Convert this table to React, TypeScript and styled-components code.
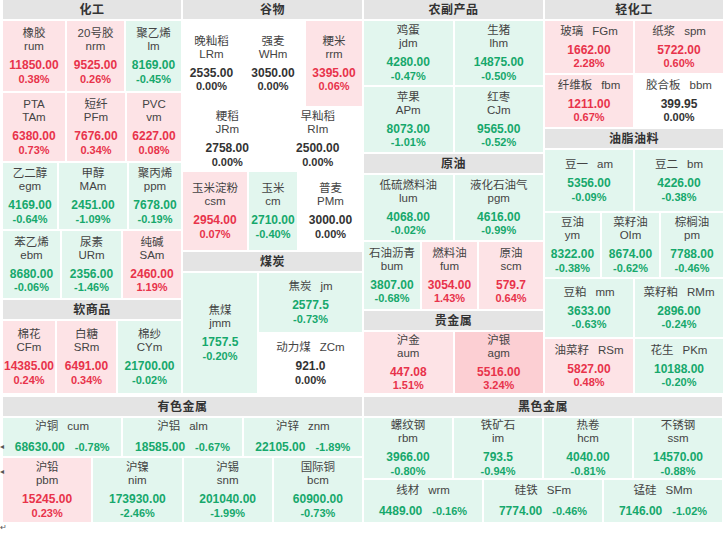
import React from 'react';
import styled, { createGlobalStyle } from 'styled-components';

type Tone = 'up' | 'down' | 'flat' | 'hot';
type Layout = 'stack' | 'inline' | 'flat';

interface Quote {
  name: string;
  code: string;
  price: string;
  pct: string;
  hot?: boolean;
}

interface RowDef {
  h: number;
  cols: string;
  layout: Layout;
  cells: Quote[];
}

const q = (name: string, code: string, price: string, pct: string, hot?: boolean): Quote => ({ name, code, price, pct, hot });

const toneOf = (x: Quote): Tone => {
  if (x.hot) return 'hot';
  if (x.pct.startsWith('-')) return 'down';
  if (x.pct === '0.00%') return 'flat';
  return 'up';
};

const BG: Record<Tone, string> = {
  up: '#fde3e6',
  down: '#e2f6ee',
  flat: '#ffffff',
  hot: '#fccfd3',
};

const FG: Record<Tone, string> = {
  up: '#e8334b',
  down: '#16a86c',
  flat: '#333333',
  hot: '#e8334b',
};

const Global = createGlobalStyle`
  html, body { margin: 0; padding: 0; background: #ffffff; }
  body { font-family: "Liberation Sans", "Noto Sans CJK SC", sans-serif; }
`;

const Page = styled.div`
  position: relative;
  width: 725px;
  height: 533px;
  padding-left: 3px;
  box-sizing: border-box;
`;

const Top = styled.div`
  display: grid;
  grid-template-columns: 178px 179px 179px 178px;
  column-gap: 2px;
`;

const Column = styled.div`
  display: flex;
  flex-direction: column;
  gap: 2px;
`;

const Bottom = styled.div`
  display: grid;
  grid-template-columns: 359px 358px;
  column-gap: 2px;
  margin-top: 4px;
`;

const SectionBox = styled.section`
  display: flex;
  flex-direction: column;
  gap: 2px;
`;

const Header = styled.div<{ $h: number }>`
  height: ${p => p.$h}px;
  background: #e4e4e4;
  display: flex;
  align-items: center;
  justify-content: center;
  font-size: 12px;
  line-height: 14px;
  font-weight: 700;
  color: #333;
  letter-spacing: 0.5px;
`;

const Row = styled.div<{ $h: number; $cols: string }>`
  display: grid;
  grid-template-columns: ${p => p.$cols};
  column-gap: 2px;
  height: ${p => p.$h}px;
`;

const Cell = styled.div<{ $tone: Tone; $layout: Layout }>`
  background: ${p => BG[p.$tone]};
  display: flex;
  flex-direction: column;
  align-items: center;
  justify-content: center;
  gap: ${p => (p.$layout === 'flat' ? 8 : 6)}px;
  min-width: 0;
  white-space: nowrap;
`;

const Labels = styled.div<{ $inline: boolean }>`
  display: flex;
  flex-direction: ${p => (p.$inline ? 'row' : 'column')};
  align-items: center;
  column-gap: 9px;
  font-size: 11.5px;
  line-height: 13px;
  color: #444;
`;

const Numbers = styled.div<{ $inline: boolean; $tone: Tone }>`
  display: flex;
  flex-direction: ${p => (p.$inline ? 'row' : 'column')};
  align-items: center;
  column-gap: 10px;
  font-size: 12px;
  line-height: 13.5px;
  font-weight: 700;
  color: ${p => FG[p.$tone]};
`;

const Pct = styled.span`
  font-size: 11px;
  line-height: 12.5px;
`;

const Split = styled.div<{ $h: number; $cols: string }>`
  display: grid;
  grid-template-columns: ${p => p.$cols};
  column-gap: 2px;
  height: ${p => p.$h}px;
`;

const Stack = styled.div<{ $rows: string }>`
  display: grid;
  grid-template-rows: ${p => p.$rows};
  row-gap: 2px;
`;

const Mark = styled.span<{ $top: number }>`
  position: absolute;
  left: 0;
  top: ${p => p.$top}px;
  font-size: 8px;
  line-height: 9px;
  color: #555;
`;

const QuoteCell: React.FC<{ x: Quote; layout: Layout }> = ({ x, layout }) => {
  const tone = toneOf(x);
  return (
    <Cell $tone={tone} $layout={layout}>
      <Labels $inline={layout !== 'stack'}>
        <span>{x.name}</span>
        <span>{x.code}</span>
      </Labels>
      <Numbers $inline={layout === 'flat'} $tone={tone}>
        <span>{x.price}</span>
        <Pct>{x.pct}</Pct>
      </Numbers>
    </Cell>
  );
};

const Section: React.FC<{ title: string; hh?: number; rows: RowDef[] }> = ({ title, hh = 19, rows }) => (
  <SectionBox>
    <Header $h={hh}>{title}</Header>
    {rows.map((r, i) => (
      <Row key={i} $h={r.h} $cols={r.cols}>
        {r.cells.map(c => (
          <QuoteCell key={c.code} x={c} layout={r.layout} />
        ))}
      </Row>
    ))}
  </SectionBox>
);

const chem: RowDef[] = [
  { h: 70, cols: '62px 57px 1fr', layout: 'stack', cells: [q('橡胶', 'rum', '11850.00', '0.38%'), q('20号胶', 'nrm', '9525.00', '0.26%'), q('聚乙烯', 'lm', '8169.00', '-0.45%')] },
  { h: 68, cols: '62px 58px 1fr', layout: 'stack', cells: [q('PTA', 'TAm', '6380.00', '0.73%'), q('短纤', 'PFm', '7676.00', '0.34%'), q('PVC', 'vm', '6227.00', '0.08%')] },
  { h: 66, cols: '54px 68px 1fr', layout: 'stack', cells: [q('乙二醇', 'egm', '4169.00', '-0.64%'), q('甲醇', 'MAm', '2451.00', '-1.09%'), q('聚丙烯', 'ppm', '7678.00', '-0.19%')] },
  { h: 67, cols: '57px 59px 1fr', layout: 'stack', cells: [q('苯乙烯', 'ebm', '8680.00', '-0.06%'), q('尿素', 'URm', '2356.00', '-1.46%'), q('纯碱', 'SAm', '2460.00', '1.19%')] },
];

const soft: RowDef[] = [
  { h: 72, cols: '52px 59px 1fr', layout: 'stack', cells: [q('棉花', 'CFm', '14385.00', '0.24%'), q('白糖', 'SRm', '6491.00', '0.34%'), q('棉纱', 'CYm', '21700.00', '-0.02%')] },
];

const grain: RowDef[] = [
  { h: 85, cols: '57px 62px 1fr', layout: 'stack', cells: [q('晚籼稻', 'LRm', '2535.00', '0.00%'), q('强麦', 'WHm', '3050.00', '0.00%'), q('粳米', 'rrm', '3395.00', '0.06%')] },
  { h: 62, cols: '1fr 1fr', layout: 'stack', cells: [q('粳稻', 'JRm', '2758.00', '0.00%'), q('早籼稻', 'RIm', '2500.00', '0.00%')] },
  { h: 78, cols: '64px 48px 1fr', layout: 'stack', cells: [q('玉米淀粉', 'csm', '2954.00', '0.07%'), q('玉米', 'cm', '2710.00', '-0.40%'), q('普麦', 'PMm', '3000.00', '0.00%')] },
];

const agri: RowDef[] = [
  { h: 64, cols: '1fr 1fr', layout: 'stack', cells: [q('鸡蛋', 'jdm', '4280.00', '-0.47%'), q('生猪', 'lhm', '14875.00', '-0.50%')] },
  { h: 65, cols: '1fr 1fr', layout: 'stack', cells: [q('苹果', 'APm', '8073.00', '-1.01%'), q('红枣', 'CJm', '9565.00', '-0.52%')] },
];

const crude: RowDef[] = [
  { h: 65, cols: '1fr 1fr', layout: 'stack', cells: [q('低硫燃料油', 'lum', '4068.00', '-0.02%'), q('液化石油气', 'pgm', '4616.00', '-0.99%')] },
  { h: 67, cols: '56px 55px 1fr', layout: 'stack', cells: [q('石油沥青', 'bum', '3807.00', '-0.68%'), q('燃料油', 'fum', '3054.00', '1.43%'), q('原油', 'scm', '579.7', '0.64%')] },
];

const precious: RowDef[] = [
  { h: 61, cols: '1fr 1fr', layout: 'stack', cells: [q('沪金', 'aum', '447.08', '1.51%'), q('沪银', 'agm', '5516.00', '3.24%', true)] },
];

const light: RowDef[] = [
  { h: 52, cols: '1fr 1fr', layout: 'inline', cells: [q('玻璃', 'FGm', '1662.00', '2.28%'), q('纸浆', 'spm', '5722.00', '0.60%')] },
  { h: 52, cols: '1fr 1fr', layout: 'inline', cells: [q('纤维板', 'fbm', '1211.00', '0.67%'), q('胶合板', 'bbm', '399.95', '0.00%')] },
];

const oils: RowDef[] = [
  { h: 61, cols: '1fr 1fr', layout: 'inline', cells: [q('豆一', 'am', '5356.00', '-0.09%'), q('豆二', 'bm', '4226.00', '-0.38%')] },
  { h: 64, cols: '55px 57px 1fr', layout: 'stack', cells: [q('豆油', 'ym', '8322.00', '-0.38%'), q('菜籽油', 'OIm', '8674.00', '-0.62%'), q('棕榈油', 'pm', '7788.00', '-0.46%')] },
  { h: 58, cols: '1fr 1fr', layout: 'inline', cells: [q('豆粕', 'mm', '3633.00', '-0.63%'), q('菜籽粕', 'RMm', '2896.00', '-0.24%')] },
  { h: 54, cols: '1fr 1fr', layout: 'inline', cells: [q('油菜籽', 'RSm', '5827.00', '0.48%'), q('花生', 'PKm', '10188.00', '-0.20%')] },
];

const nonferrous: RowDef[] = [
  { h: 38, cols: '1fr 1fr 1fr', layout: 'flat', cells: [q('沪铜', 'cum', '68630.00', '-0.78%'), q('沪铝', 'alm', '18585.00', '-0.67%'), q('沪锌', 'znm', '22105.00', '-1.89%')] },
  { h: 64, cols: '1fr 1fr 1fr 1fr', layout: 'stack', cells: [q('沪铅', 'pbm', '15245.00', '0.23%'), q('沪镍', 'nim', '173930.00', '-2.46%'), q('沪锡', 'snm', '201040.00', '-1.99%'), q('国际铜', 'bcm', '60900.00', '-0.73%')] },
];

const ferrous: RowDef[] = [
  { h: 60, cols: '1fr 1fr 1fr 1fr', layout: 'stack', cells: [q('螺纹钢', 'rbm', '3966.00', '-0.80%'), q('铁矿石', 'im', '793.5', '-0.94%'), q('热卷', 'hcm', '4040.00', '-0.81%'), q('不锈钢', 'ssm', '14570.00', '-0.88%')] },
  { h: 42, cols: '1fr 1fr 1fr', layout: 'flat', cells: [q('线材', 'wrm', '4489.00', '-0.16%'), q('硅铁', 'SFm', '7774.00', '-0.46%'), q('锰硅', 'SMm', '7146.00', '-1.02%')] },
];

export default function App() {
  return (
    <>
      <Global />
      <Page>
        <Top>
          <Column>
            <Section title="化工" rows={chem} />
            <Section title="软商品" rows={soft} />
          </Column>
          <Column>
            <Section title="谷物" rows={grain} />
            <SectionBox>
              <Header $h={19}>煤炭</Header>
              <Split $h={120} $cols="74px 1fr">
                <QuoteCell x={q('焦煤', 'jmm', '1757.5', '-0.20%')} layout="stack" />
                <Stack $rows="59px 1fr">
                  <QuoteCell x={q('焦炭', 'jm', '2577.5', '-0.73%')} layout="inline" />
                  <QuoteCell x={q('动力煤', 'ZCm', '921.0', '0.00%')} layout="inline" />
                </Stack>
              </Split>
            </SectionBox>
          </Column>
          <Column>
            <Section title="农副产品" rows={agri} />
            <Section title="原油" rows={crude} />
            <Section title="贵金属" rows={precious} />
          </Column>
          <Column>
            <Section title="轻化工" rows={light} />
            <Section title="油脂油料" rows={oils} />
          </Column>
        </Top>
        <Bottom>
          <Section title="有色金属" rows={nonferrous} />
          <Section title="黑色金属" rows={ferrous} />
        </Bottom>
        <Mark $top={442}>◂</Mark>
        <Mark $top={467}>◂</Mark>
        <Mark $top={523}>↵</Mark>
      </Page>
    </>
  );
}
